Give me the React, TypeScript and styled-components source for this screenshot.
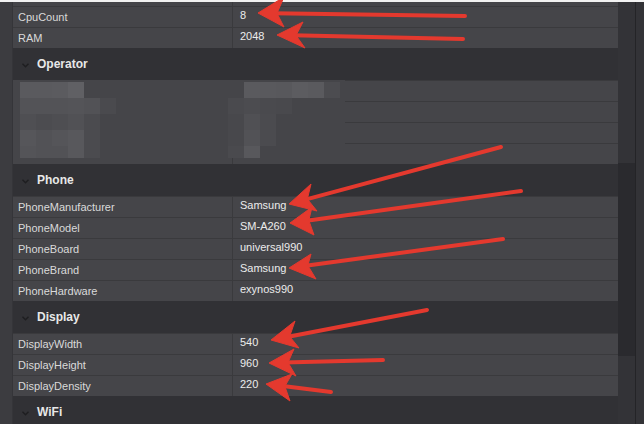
import React from "react";
import styled, { createGlobalStyle } from "styled-components";

const GlobalStyle = createGlobalStyle`
  html, body { margin: 0; padding: 0; background: #333337; }
  body { font-family: "Liberation Sans", Arial, sans-serif; }
  #root { width: 644px; height: 424px; }
`;

const Frame = styled.div`
  position: relative;
  width: 644px;
  height: 424px;
  overflow: hidden;
  display: flex;
  flex-direction: column;
  background: #333337;
`;

const TopEdge = styled.div`
  flex: none;
  height: 2px;
  background: #f2f2f2;
`;

const Body = styled.div`
  flex: 1;
  display: flex;
  min-height: 0;
`;

const SideStrip = styled.div`
  flex: none;
  width: 12px;
  background: #3c3c40;
  border-right: 1px solid #353539;
`;

const Sheet = styled.div`
  flex: none;
  width: 605px;
  display: flex;
  flex-direction: column;
  overflow: hidden;
`;

const Row = styled.div<{ $partial?: boolean }>`
  flex: none;
  display: flex;
  height: ${(p) => (p.$partial ? 4 : 20)}px;
  border-top: ${(p) => (p.$partial ? "none" : "1px solid #3a3a3d")};
  background: #454549;
  font-size: 11px;
  overflow: hidden;
`;

const Label = styled.div`
  box-sizing: border-box;
  flex: none;
  width: 220px;
  padding-left: 5px;
  border-right: 1px solid #3a3a3d;
  line-height: 20px;
  color: #dadada;
  white-space: nowrap;
`;

const Value = styled.div`
  flex: 1;
  padding-left: 7px;
  line-height: 16px;
  color: #ececec;
  white-space: nowrap;
`;

const Section = styled.div`
  flex: none;
  height: 32px;
  display: flex;
  align-items: center;
  gap: 8px;
  padding-left: 9px;
  background: #313135;
  font: bold 12px "Liberation Sans", Arial, sans-serif;
  color: #e8e8e8;
`;

const Chevron = styled.svg`
  flex: none;
  margin-top: 2px;
`;

const Scrollbar = styled.div`
  flex: none;
  box-sizing: border-box;
  width: 17px;
  padding-top: 161px;
  background: #333337;
`;

const Thumb = styled.div`
  height: 193px;
  background: #2a2a2e;
`;

const RightEdge = styled.div`
  flex: 1;
  background: #333337;
  border-left: 1px solid #242427;
`;

const Mosaic = styled.div`
  position: absolute;
  left: 13px;
  top: 80px;
  width: 332px;
  height: 78px;
  box-sizing: border-box;
  padding: 2px 0 0 7px;
  background: #454549;
  overflow: hidden;
  display: grid;
  grid-template-columns: repeat(21, 16px);
  grid-auto-rows: 16px;
`;

const Tile = styled.div<{ $c: string | null }>`
  background: ${(p) => p.$c ?? "transparent"};
`;

const Annotations = styled.svg`
  position: absolute;
  left: 0;
  top: 0;
  pointer-events: none;
`;

type Pt = [number, number];

const RED = "#e4392e";

function ArrowMark({ tip, up, low, tail }: { tip: Pt; up: Pt; low: Pt; tail: Pt }) {
  const dx = tail[0] - tip[0];
  const dy = tail[1] - tip[1];
  const len = Math.hypot(dx, dy);
  const notch: Pt = [tip[0] + (dx / len) * 19, tip[1] + (dy / len) * 19];
  const pts = [tip, up, notch, low].map((p) => p.join(",")).join(" ");
  return (
    <g>
      <line
        x1={notch[0] - (dx / len) * 4}
        y1={notch[1] - (dy / len) * 4}
        x2={tail[0]}
        y2={tail[1]}
        stroke={RED}
        strokeWidth={4}
        strokeLinecap="round"
      />
      <polygon points={pts} fill={RED} stroke={RED} strokeWidth={1} strokeLinejoin="round" />
    </g>
  );
}

const arrows: { tip: Pt; up: Pt; low: Pt; tail: Pt }[] = [
  { tip: [258, 13], up: [284, -3], low: [284, 27], tail: [465, 16] },
  { tip: [277, 35], up: [303, 22], low: [305, 48], tail: [463, 39] },
  { tip: [289, 204], up: [311, 184], low: [317, 211], tail: [501, 147] },
  { tip: [290, 223], up: [312, 207], low: [314, 235], tail: [521, 191] },
  { tip: [289, 268], up: [311, 254], low: [316, 279], tail: [503, 239] },
  { tip: [271, 340], up: [295, 321], low: [299, 348], tail: [427, 310] },
  { tip: [269, 363], up: [294, 349], low: [296, 376], tail: [383, 360] },
  { tip: [266, 384], up: [292, 374], low: [290, 401], tail: [331, 392] },
];

const N = null;
const mosaic: (string | null)[][] = [
  ["#5a5a5e", "#5a5a5e", "#5b5b5f", "#606064", N, N, N, N, N, N, N, N, N, N, "#5a5a5e", "#59595d", "#58585c", "#5c5c60", "#5a5a5e", "#4c4c50", N],
  ["#535357", "#535357", "#535357", "#545458", "#525256", "#4a4a4e", N, N, N, N, N, N, N, "#4a4a4e", "#4c4c50", "#4a4a4e", "#49494d", N, N, N, N],
  ["#4f4f53", "#4c4c50", "#4e4e52", "#515155", "#4b4b4f", N, N, N, N, N, N, N, N, "#48484c", "#505054", "#4b4b4f", N, N, N, N, N],
  ["#56565a", "#525256", "#555559", "#58585c", "#4b4b4f", N, N, N, N, N, N, N, N, "#48484c", "#525256", "#4b4b4f", N, N, N, N, N],
  ["#545458", "#525256", "#525256", "#58585c", "#4b4b4f", N, N, N, N, N, N, N, N, "#4a4a4e", "#58585c", N, N, N, N, N, N],
];

type Item =
  | { kind: "row"; label: string; value: string }
  | { kind: "section"; title: string };

const items: Item[] = [
  { kind: "row", label: "CpuCount", value: "8" },
  { kind: "row", label: "RAM", value: "2048" },
  { kind: "section", title: "Operator" },
  { kind: "row", label: "", value: "" },
  { kind: "row", label: "", value: "" },
  { kind: "row", label: "", value: "" },
  { kind: "row", label: "", value: "" },
  { kind: "section", title: "Phone" },
  { kind: "row", label: "PhoneManufacturer", value: "Samsung" },
  { kind: "row", label: "PhoneModel", value: "SM-A260" },
  { kind: "row", label: "PhoneBoard", value: "universal990" },
  { kind: "row", label: "PhoneBrand", value: "Samsung" },
  { kind: "row", label: "PhoneHardware", value: "exynos990" },
  { kind: "section", title: "Display" },
  { kind: "row", label: "DisplayWidth", value: "540" },
  { kind: "row", label: "DisplayHeight", value: "960" },
  { kind: "row", label: "DisplayDensity", value: "220" },
  { kind: "section", title: "WiFi" },
];

export default function App() {
  return (
    <>
      <GlobalStyle />
      <Frame>
        <TopEdge />
        <Body>
          <SideStrip />
          <Sheet>
            <Row $partial>
              <Label />
              <Value />
            </Row>
            {items.map((it, i) =>
              it.kind === "row" ? (
                <Row key={i}>
                  <Label>{it.label}</Label>
                  <Value>{it.value}</Value>
                </Row>
              ) : (
                <Section key={i}>
                  <Chevron width="7" height="5" viewBox="0 0 7 5">
                    <polyline points="0.5,0.8 3.5,3.8 6.5,0.8" fill="none" stroke="#1e1e21" strokeWidth="1.4" />
                  </Chevron>
                  <span>{it.title}</span>
                </Section>
              )
            )}
          </Sheet>
          <Scrollbar>
            <Thumb />
          </Scrollbar>
          <RightEdge />
        </Body>
        <Mosaic>
          {mosaic.flatMap((r, j) => r.map((c, i) => <Tile key={`${j}-${i}`} $c={c} />))}
        </Mosaic>
        <Annotations width="644" height="424" viewBox="0 0 644 424">
          {arrows.map((a, i) => (
            <ArrowMark key={i} {...a} />
          ))}
        </Annotations>
      </Frame>
    </>
  );
}
